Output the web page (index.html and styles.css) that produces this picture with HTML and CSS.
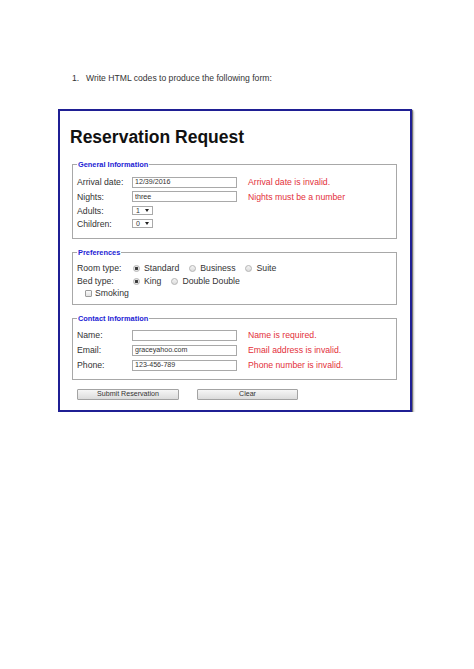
FILE: index.html
```html
<!DOCTYPE html>
<html lang="en">
<head>
<meta charset="utf-8">
<title>Reservation Request</title>
<link rel="stylesheet" href="styles.css">
</head>
<body>
<p class="task"><span class="num">1.</span><span>Write HTML codes to produce the following form:</span></p>

<div class="box">
  <h1 class="title">Reservation Request</h1>

  <fieldset class="fs fs-general">
    <legend>General Information</legend>
    <div class="grid grid-general">
      <label class="lbl">Arrival date:</label>
      <input class="txt" type="text" value="12/39/2016">
      <span class="err">Arrival date is invalid.</span>

      <label class="lbl">Nights:</label>
      <input class="txt" type="text" value="three">
      <span class="err">Nights must be a number</span>

      <label class="lbl">Adults:</label>
      <span class="sel"><span class="sel-val">1</span><span class="caret"></span></span>
      <span></span>

      <label class="lbl">Children:</label>
      <span class="sel"><span class="sel-val">0</span><span class="caret"></span></span>
      <span></span>
    </div>
  </fieldset>

  <fieldset class="fs fs-prefs">
    <legend>Preferences</legend>
    <div class="prefs">
      <div class="prow">
        <span class="lbl">Room type:</span>
        <label class="opt"><input class="radio" type="radio" name="room" checked>Standard</label>
        <label class="opt"><input class="radio" type="radio" name="room">Business</label>
        <label class="opt"><input class="radio" type="radio" name="room">Suite</label>
      </div>
      <div class="prow">
        <span class="lbl">Bed type:</span>
        <label class="opt"><input class="radio" type="radio" name="bed" checked>King</label>
        <label class="opt"><input class="radio" type="radio" name="bed">Double Double</label>
      </div>
      <div class="prow prow-smoke">
        <label class="opt"><input class="check" type="checkbox">Smoking</label>
      </div>
    </div>
  </fieldset>

  <fieldset class="fs fs-contact">
    <legend>Contact Information</legend>
    <div class="grid grid-contact">
      <label class="lbl">Name:</label>
      <input class="txt" type="text" value="">
      <span class="err">Name is required.</span>

      <label class="lbl">Email:</label>
      <input class="txt" type="text" value="graceyahoo.com">
      <span class="err">Email address is invalid.</span>

      <label class="lbl">Phone:</label>
      <input class="txt" type="text" value="123-456-789">
      <span class="err">Phone number is invalid.</span>
    </div>
  </fieldset>

  <div class="buttons">
    <button class="btn btn-submit" type="button">Submit Reservation</button>
    <button class="btn btn-clear" type="button">Clear</button>
  </div>
</div>
</body>
</html>
```
FILE: styles.css
```css
* { box-sizing: border-box; }

html, body {
  margin: 0;
  padding: 0;
  background: #ffffff;
}

body {
  font-family: "Liberation Sans", Arial, sans-serif;
  color: #222;
}

.task {
  margin: 73px 0 0 72px;
  font-size: 8.6px;
  line-height: 10px;
  color: #333;
  display: flex;
}

.task .num {
  width: 14px;
}

.box {
  margin: 26px 0 0 58px;
  width: 354px;
  border: 2px solid #1f1f94;
  box-shadow: 1px 1px 1px rgba(0, 0, 0, 0.45), 2px 2px 2px rgba(0, 0, 0, 0.2);
  padding: 16px 13px 10px 10px;
  background: #fff;
}

.title {
  margin: 0;
  font-size: 17.5px;
  line-height: 20px;
  font-weight: bold;
  color: #111;
}

.fs {
  margin: 8.5px 0 0 2px;
  border: 1px solid #a8a8a8;
  padding: 5px 4px 6.5px 4px;
  min-width: 0;
}

.fs-general {
  margin-top: 12.5px;
  padding-top: 6px;
  padding-bottom: 8.5px;
}

.fs-prefs {
  padding-bottom: 5.5px;
}

.fs legend {
  padding: 0 1px;
  font-size: 7.4px;
  line-height: 9px;
  font-weight: bold;
  color: #1c1cd4;
}

.grid {
  display: grid;
  grid-template-columns: 55px 105px auto;
  align-items: center;
  font-size: 8.7px;
  color: #333;
}

.grid-general {
  grid-template-rows: 15px 14px 14px 12px;
}

.grid-contact {
  grid-template-rows: 15px 15px 15px;
}

.lbl {
  font-size: 8.7px;
  color: #333;
}

.txt {
  -webkit-appearance: none;
  appearance: none;
  width: 105px;
  height: 11px;
  margin: 0;
  border: 1px solid #a9a9a9;
  border-radius: 0;
  padding: 0 2px;
  font-family: "Liberation Sans", Arial, sans-serif;
  font-size: 7.1px;
  line-height: 9px;
  color: #333;
  background: #fff;
}

.err {
  margin-left: 11px;
  color: #e3303a;
  font-size: 8.7px;
  white-space: nowrap;
}

.sel {
  display: flex;
  align-items: center;
  justify-content: space-between;
  width: 21px;
  height: 9px;
  border: 1px solid #a9a9a9;
  padding: 0 3px 0 3px;
  font-size: 7px;
  color: #333;
  background: #fff;
}

.sel-val {
  line-height: 7px;
}

.caret {
  width: 0;
  height: 0;
  border-left: 2.5px solid transparent;
  border-right: 2.5px solid transparent;
  border-top: 3px solid #222;
}

.prefs {
  display: grid;
  grid-template-rows: 13px 13px 11px;
  font-size: 8.7px;
  color: #333;
}

.prow {
  display: flex;
  align-items: center;
}

.prow .lbl {
  width: 55.5px;
  flex: none;
}

.opt {
  display: flex;
  align-items: center;
  margin-right: 9.5px;
  white-space: nowrap;
}

.radio {
  -webkit-appearance: none;
  appearance: none;
  width: 7px;
  height: 7px;
  margin: 0 4.5px 0 0;
  border: 1px solid #b4b4b4;
  border-radius: 50%;
  background: linear-gradient(#f4f4f4, #dcdcdc);
  position: relative;
  flex: none;
}

.radio:checked {
  background: radial-gradient(circle, #3a3a3a 0 1.4px, #e6e6e6 1.6px);
}

.prow-smoke {
  padding-left: 8px;
}

.check {
  -webkit-appearance: none;
  appearance: none;
  width: 7px;
  height: 7px;
  margin: 0 3px 0 0;
  border: 1px solid #9c9c9c;
  border-radius: 1px;
  background: linear-gradient(#fafafa, #e2e2e2);
  flex: none;
}

.buttons {
  display: flex;
  gap: 18px;
  margin: 9px 0 0 7px;
}

.btn {
  height: 11px;
  margin: 0;
  padding: 0;
  border: 1px solid #a3a3a3;
  border-radius: 1px;
  background: linear-gradient(#f6f6f6, #dcdcdc);
  font-family: "Liberation Sans", Arial, sans-serif;
  font-size: 7.1px;
  line-height: 9px;
  color: #333;
}

.btn-submit { width: 102px; }
.btn-clear { width: 101px; }
```
